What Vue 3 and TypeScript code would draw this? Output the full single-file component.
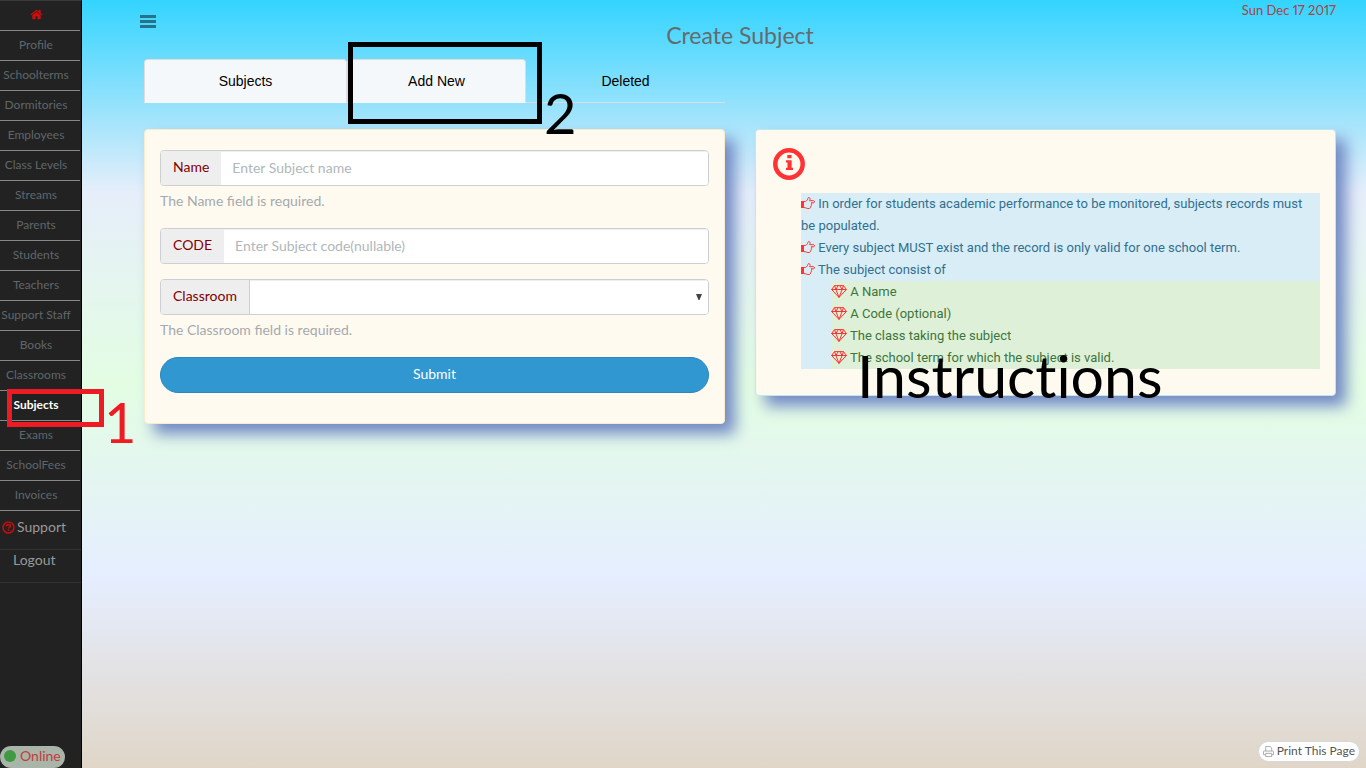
<script setup lang="ts">
import { ref } from 'vue'

const navItems: string[] = [
  'Profile', 'Schoolterms', 'Dormitories', 'Employees', 'Class Levels', 'Streams',
  'Parents', 'Students', 'Teachers', 'Support Staff', 'Books', 'Classrooms',
  'Subjects', 'Exams', 'SchoolFees', 'Invoices',
]
const activeItem = 'Subjects'
const instructions: string[] = [
  'In order for students academic performance to be monitored, subjects records must be\u00a0populated.',
  'Every subject MUST exist and the record is only valid for one school term.',
  'The subject consist of',
]
const parts: string[] = [
  'A Name',
  'A Code (optional)',
  'The class taking the subject',
  'The school term for which the subject is valid.',
]
const name = ref('')
const code = ref('')
const classroom = ref('')
</script>

<template>
  <div class="page">
    <aside class="sidebar">
      <nav>
        <a href="#" class="nav-link" aria-label="Home">
          <svg class="home" viewBox="0 0 1792 1792" aria-hidden="true">
            <path d="M1472 992v480q0 26-19 45t-45 19h-384v-384h-256v384h-384q-26 0-45-19t-19-45v-480q0-1 .5-3t.5-3l575-474 575 474q1 2 1 6zm223-69l-62 74q-8 9-21 11h-3q-13 0-21-7l-692-577-692 577q-12 8-24 7-13-2-21-11l-62-74q-8-10-7-23.5t11-21.5l719-599q32-26 76-26t76 26l244 204v-195q0-14 9-23t23-9h192q14 0 23 9t9 23v408l219 182q10 8 11 21.5t-7 23.5z" />
          </svg>
        </a>
        <a v-for="item in navItems" :key="item" href="#" class="nav-link" :class="{ active: item === activeItem }">{{ item }}</a>
      </nav>
      <a href="#" class="side-link support">
        <svg viewBox="0 0 14 14" aria-hidden="true">
          <circle cx="7" cy="7" r="5.9" fill="none" stroke="currentColor" stroke-width="1.700" />
          <path d="M4.900 5.600C4.900 4.400 6 3.900 7 3.900c1.200 0 2.100.6 2.100 1.600 0 1.300-2 1.300-2 2.600" fill="none" stroke="currentColor" stroke-width="1.700" />
          <rect x="6.200" y="9" width="1.800" height="1.700" fill="currentColor" />
        </svg>
        Support
      </a>
      <a href="#" class="side-link logout">Logout</a>
      <div class="status"><span class="dot"></span>Online</div>
    </aside>

    <main class="main">
      <header class="header">
        <button type="button" class="menu" aria-label="Toggle menu"><span></span><span></span><span></span></button>
        <h1>Create Subject</h1>
        <time datetime="2017-12-17">Sun Dec 17 2017</time>
      </header>

      <div class="columns">
        <section class="left">
          <div class="tabs" role="tablist">
            <button type="button" role="tab" class="tab filled first">Subjects</button>
            <button type="button" role="tab" class="tab filled second">Add New</button>
            <button type="button" role="tab" class="tab third">Deleted</button>
          </div>
          <form class="card form" @submit.prevent>
            <div class="group">
              <label for="name">Name</label>
              <input id="name" v-model="name" type="text" placeholder="Enter Subject name" />
            </div>
            <p class="help">The Name field is required.</p>
            <div class="group">
              <label for="code">CODE</label>
              <input id="code" v-model="code" type="text" placeholder="Enter Subject code(nullable)" />
            </div>
            <div class="group classroom">
              <label for="classroom">Classroom</label>
              <select id="classroom" v-model="classroom"><option value=""></option></select>
              <svg class="arrow" viewBox="0 0 6 6" aria-hidden="true"><path d="M0 0h6L3.500 6h-1z" fill="#444" /></svg>
            </div>
            <p class="help">The Classroom field is required.</p>
            <button type="submit" class="submit">Submit</button>
          </form>
        </section>

        <section class="card info">
          <svg class="info-icon" viewBox="0 0 32 32" aria-hidden="true">
            <circle cx="16" cy="16" r="13.700" fill="none" stroke="#f33" stroke-width="4.500" />
            <path d="M14.300 7h4.200v3.200h-4.200zM13 12.200h5.600v7.600h1.400V22h-7v-2.200h1.500v-5.400H13z" fill="#f33" />
          </svg>
          <ul class="steps">
            <li v-for="line in instructions" :key="line">
              <svg class="hand" viewBox="0 0 14 12" aria-hidden="true">
                <path d="M0 4h3v7H0z" fill="currentColor" />
                <path d="M3 4.500h1c1 0 2-1 2.600-2.200C7 1.300 7 .5 7.800.5c1.200 0 1.700 1.500.8 3.200h3.900c1.300 0 1.300 2.100 0 2.100H10c1 .5.900 1.800.100 2.100.500.800.2 1.700-.7 1.900.3 1-.3 1.700-1.300 1.700H7c-1.400 0-2-.9-4-.9" fill="none" stroke="currentColor" />
              </svg>
              {{ line }}
            </li>
            <li>
              <ul class="parts">
                <li v-for="part in parts" :key="part">
                  <svg class="gem" viewBox="0 0 16 13" aria-hidden="true">
                    <path d="M3.500.6h9L15.400 4.500 8 12.400.6 4.500zM.6 4.500h14.800M3.500.6l1.400 3.900L8 12.400l3.100-7.900L12.500.6M4.900 4.500 7.200.6M11.100 4.500 8.800.6" fill="none" stroke="currentColor" stroke-linejoin="round" />
                  </svg>
                  {{ part }}
                </li>
              </ul>
            </li>
          </ul>
        </section>
      </div>
    </main>

    <button type="button" class="print">
      <svg viewBox="0 0 12 12" aria-hidden="true">
        <path d="M3 5.500v-5h4.800L9.500 2v3.500M3 9.500H.5V6.400q0-.9.900-.9h9.200q.9 0 .9.900v3.100H9.500M3 8h6.500v3.500H3z" fill="none" stroke="#a5a5a5" />
      </svg>
      Print This Page
    </button>

    <div class="mark mark-one"></div>
    <div class="mark mark-two"></div>
    <span class="note note-one">1</span>
    <span class="note note-two">2</span>
    <span class="note note-info">Instructions</span>
  </div>
</template>

<style>
body {
  margin: 0;
}
</style>

<style scoped>
* {
  box-sizing: border-box;
}
.page {
  position: relative;
  display: flex;
  min-height: 100vh;
  font: 14px/20px Lato, "Open Sans", sans-serif;
  background: linear-gradient(#33d4ff 0%, #e6eefa 25%, #e3fde3 50%, #e5eeff 75%, #e0d6c8 100%);
}
a {
  text-decoration: none;
}
button,
input,
select {
  font: inherit;
}
.sidebar {
  display: flex;
  flex-direction: column;
  flex: 0 0 82px;
  background: #222;
  border-top: 1px solid #3a3a3a;
  border-right: 1px solid #000;
}
nav {
  margin-right: 1px;
}
.nav-link {
  display: flex;
  align-items: center;
  justify-content: center;
  height: 30px;
  padding: 0 8px 2px 0;
  border-bottom: 1px solid #888;
  font-size: 12px;
  color: #5f676b;
  white-space: nowrap;
}
.nav-link.active {
  color: #fff;
  font-weight: 700;
}
.home {
  width: 13px;
  height: 13px;
  fill: #d20c0c;
}
.side-link {
  display: flex;
  gap: 2px;
  padding-left: 2px;
  color: #999;
  border-bottom: 1px solid #333;
}
.support {
  height: 39px;
  padding-top: 6px;
}
.support svg {
  width: 13px;
  height: 13px;
  margin-top: 4px;
  color: #c40d0d;
}
.logout {
  height: 33px;
  padding-left: 13px;
}
.status {
  display: flex;
  align-items: center;
  align-self: flex-start;
  gap: 4px;
  height: 22px;
  margin-top: auto;
  padding: 0 4px 2px;
  border-radius: 11px;
  background: #a9b5a8;
  color: #c43c3c;
}
.dot {
  width: 12px;
  height: 12px;
  border-radius: 50%;
  background: #3f9a43;
}
.main {
  flex: 1;
  min-width: 0;
  padding: 0 30px 0 62px;
}
.header {
  display: grid;
  grid-template-columns: 1fr auto 1fr;
  height: 59px;
}
.menu {
  display: flex;
  flex-direction: column;
  gap: 2px;
  width: 16px;
  height: 14px;
  margin: 15px 0 0 -4px;
  padding: 0;
  border: 0;
  background: none;
}
.menu span {
  height: 3px;
  background: #25738a;
}
h1 {
  margin: 20px 0 0;
  font-size: 23px;
  line-height: 30px;
  font-weight: 400;
  color: #636b6f;
}
time {
  justify-self: end;
  font-size: 13px;
  font-variant-numeric: proportional-nums;
  color: #a94442;
}
.columns {
  display: grid;
  grid-template-columns: 1fr 1fr;
  gap: 30px;
  align-items: start;
}
.tabs {
  display: flex;
  height: 44px;
  margin-bottom: 26px;
}
.tab {
  padding: 0;
  border: 0;
  border-bottom: 1px solid #ddd;
  background: none;
  color: #000;
  font: 14px/22px "Liberation Sans", Arial, sans-serif;
}
.filled {
  background: #f5f8fa;
  border: 1px solid #ddd;
  border-bottom-color: #f5f8fa;
  border-radius: 4px 4px 0 0;
}
.first {
  flex: 202;
}
.second {
  flex: 178;
}
.third {
  flex: 200;
}
.card {
  background: #fffaf0;
  border: 1px solid #faebcc;
  border-radius: 4px;
  box-shadow: 10px 10px 15px #7189c4;
}
.form {
  padding: 20px 15px 30px;
}
.group {
  position: relative;
  display: flex;
  height: 36px;
  border: 1px solid #ccd0d2;
  border-radius: 4px;
  background: #fff;
  overflow: hidden;
}
.group label {
  padding: 6px 12px;
  background: #eee;
  color: #800000;
}
.group input,
.group select {
  flex: 1;
  min-width: 0;
  padding: 0 11px;
  border: 0;
  outline: 0;
  background: #fff;
  color: #555;
  box-shadow: inset 0 1px 1px rgba(0, 0, 0, 0.07);
}
.group select {
  appearance: none;
  border-left: 1px solid #ccd0d2;
}
.group input::placeholder {
  color: #b1b7ba;
  opacity: 1;
}
.classroom {
  margin-top: 15px;
}
.arrow {
  position: absolute;
  right: 6px;
  top: 14px;
  width: 6px;
  height: 6px;
  pointer-events: none;
}
.help {
  margin: 5px 0 17px;
  color: #a4aaae;
}
.submit {
  display: block;
  width: 100%;
  height: 36px;
  padding: 0 0 2px;
  border: 1px solid #2a88bd;
  border-radius: 18px;
  background: #3097d1;
  color: #fff;
}
.info {
  margin-top: 70px;
  padding: 18px 15px 26px 17px;
  border-color: #bce8f1;
}
.info-icon {
  display: block;
  width: 32px;
  height: 32px;
}
ul {
  margin: 0;
  padding: 0;
  list-style: none;
}
.steps {
  margin: 13px 0 0 28px;
  font: 13px/22px Roboto, "Open Sans", sans-serif;
  background: #d9edf7;
  color: #31708f;
}
.parts {
  margin-left: 30px;
  background: #dff0d8;
  color: #3c763d;
}
.hand {
  width: 14px;
  height: 12px;
  vertical-align: -1px;
  color: #f33;
}
.gem {
  width: 16px;
  height: 13px;
  vertical-align: -2px;
  color: #f33;
}
.print {
  position: absolute;
  right: 6px;
  bottom: 6px;
  display: flex;
  align-items: center;
  gap: 3px;
  height: 21px;
  padding: 0 4px 1px;
  border: 1px solid #d5d8da;
  border-radius: 11px;
  background: #fff;
  font-size: 12px;
  line-height: 18px;
  color: #555;
}
.print svg {
  width: 11px;
  height: 11px;
}
.mark {
  position: absolute;
  pointer-events: none;
}
.mark-one {
  left: 7px;
  top: 389px;
  width: 97px;
  height: 38px;
  border: 5px solid #ed1c24;
}
.mark-two {
  left: 348px;
  top: 42px;
  width: 194px;
  height: 82px;
  border: 5px solid #000;
}
.note {
  position: absolute;
  font-size: 56px;
  line-height: 60px;
  font-variant-ligatures: none;
  color: #000;
  pointer-events: none;
}
.note-one {
  left: 104px;
  top: 392px;
  color: #ed1c24;
}
.note-two {
  left: 544px;
  top: 83px;
}
.note-info {
  left: 857px;
  top: 346px;
  font-size: 59px;
}
</style>
